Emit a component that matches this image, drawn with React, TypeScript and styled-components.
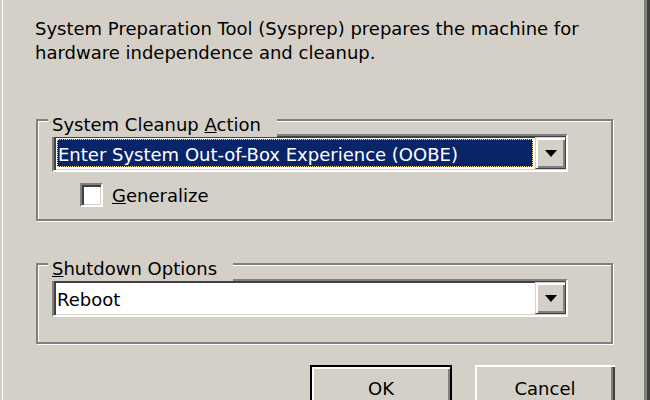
import React from "react";
import styled, { createGlobalStyle } from "styled-components";

const Global = createGlobalStyle`
  html, body { margin: 0; padding: 0; background: #d4d0c8; }
  body { font-family: "DejaVu Sans", Verdana, sans-serif; font-size: 18px; line-height: 24px; color: #000; }
  * { box-sizing: border-box; }
`;

const Window = styled.div`
  width: 650px;
  height: 400px;
  overflow: hidden;
  background: #d4d0c8;
  display: flex;
  flex-direction: column;
  box-shadow: inset 2px 0 0 #d4d0c8, inset 3px 0 0 #ffffff, inset -3px 0 0 #404040, inset -6px 0 0 #808080;
`;

const TitleStrip = styled.div`
  height: 3px;
  margin: 0 6px 0 3px;
  background: linear-gradient(to right, #0a246a, #a6caf0);
`;

const Content = styled.div`
  display: flex;
  flex-direction: column;
  padding: 0 35px 0 36px;
`;

const Description = styled.p`
  margin: 17px 0 0 -1px;
  width: 590px;
  white-space: nowrap;
`;

const Group = styled.div<{ $top: number; $height: number; $padTop: number }>`
  position: relative;
  margin-top: ${(p) => p.$top}px;
  width: 577px;
  height: ${(p) => p.$height}px;
  border: 2px solid #808080;
  box-shadow: inset 1px 1px 0 #ffffff, 1px 1px 0 #ffffff;
  padding: ${(p) => p.$padTop}px 0 0 14px;
  display: flex;
  flex-direction: column;
  align-items: flex-start;
`;

const Caption = styled.span<{ $top: number }>`
  position: absolute;
  top: ${(p) => p.$top}px;
  left: 10px;
  padding: 0 16px 0 4px;
  background: #d4d0c8;
  white-space: nowrap;
`;

const Combo = styled.div`
  width: 516px;
  height: 38px;
  border: 2px solid;
  border-color: #808080 #ffffff #ffffff #808080;
  box-shadow: inset 1px 1px 0 #404040, inset 2px 2px 0 #404040, inset -1px -1px 0 #d4d0c8;
  background: #ffffff;
  padding: 1px 0 1px 1px;
  display: flex;
  align-items: stretch;
`;

const Field = styled.div<{ $selected?: boolean }>`
  flex: 1;
  margin: ${(p) => (p.$selected ? "2px 2px 2px 2px" : "0 2px 0 1px")};
  padding: 3px 0 0 1px;
  display: flex;
  align-items: center;
  white-space: nowrap;
  overflow: hidden;
  background: ${(p) => (p.$selected ? "#0a246a" : "transparent")};
  color: ${(p) => (p.$selected ? "#ffffff" : "#000000")};
  outline: ${(p) => (p.$selected ? "1px dotted #f5db95" : "none")};
  outline-offset: -1px;
`;

const DropButton = styled.div`
  width: 31px;
  height: 32px;
  align-self: center;
  background: #d4d0c8;
  border: 1px solid;
  border-color: #d4d0c8 #404040 #404040 #d4d0c8;
  box-shadow: inset 1px 1px 0 #ffffff, inset 2px 2px 0 #ffffff, inset -1px -1px 0 #808080, inset -2px -2px 0 #808080;
  display: flex;
  align-items: center;
  justify-content: center;
`;

const CheckRow = styled.label`
  display: flex;
  align-items: center;
  gap: 9px;
  margin: 9px 0 0 28px;
`;

const CheckBox = styled.span`
  width: 23px;
  height: 24px;
  flex: none;
  background: #ffffff;
  border: 2px solid;
  border-color: #808080 #ffffff #ffffff #808080;
  box-shadow: inset 1px 1px 0 #404040, inset 2px 2px 0 #404040, inset -1px -1px 0 #d4d0c8;
`;

const CheckText = styled.span`
  padding-top: 3px;
`;

const ButtonRow = styled.div`
  display: flex;
  justify-content: flex-end;
  gap: 23px;
  margin-top: 21px;
  width: 579px;
`;

const PushButton = styled.div<{ $default?: boolean }>`
  width: ${(p) => (p.$default ? 142 : 140)}px;
  height: 42px;
  flex: none;
  display: flex;
  align-items: center;
  justify-content: center;
  background: #d4d0c8;
  border: ${(p) => (p.$default ? "2px solid #000" : "none")};
  box-shadow: ${(p) =>
    p.$default
      ? "inset 2px 2px 0 #ffffff, inset -2px -2px 0 #808080"
      : "inset 2px 2px 0 #ffffff, inset -2px -2px 0 #404040, inset -4px -4px 0 #808080"};
  padding-top: 6px;
`;

const Arrow = () => (
  <svg width="12" height="7" viewBox="0 0 12 7">
    <polygon points="0,0 12,0 6,7" fill="#000" />
  </svg>
);

export default function App() {
  return (
    <>
      <Global />
      <Window>
        <TitleStrip />
        <Content>
          <Description>
            System Preparation Tool (Sysprep) prepares the machine for
            <br />
            hardware independence and cleanup.
          </Description>

          <Group $top={54} $height={102} $padTop={13}>
            <Caption $top={-8}>
              System Cleanup <u>A</u>ction
            </Caption>
            <Combo>
              <Field $selected>Enter System Out-of-Box Experience (OOBE)</Field>
              <DropButton>
                <Arrow />
              </DropButton>
            </Combo>
            <CheckRow>
              <CheckBox />
              <CheckText>
                <u>G</u>eneralize
              </CheckText>
            </CheckRow>
          </Group>

          <Group $top={42} $height={81} $padTop={14}>
            <Caption $top={-8}>
              <u>S</u>hutdown Options
            </Caption>
            <Combo>
              <Field>Reboot</Field>
              <DropButton>
                <Arrow />
              </DropButton>
            </Combo>
          </Group>

          <ButtonRow>
            <PushButton $default>OK</PushButton>
            <PushButton>Cancel</PushButton>
          </ButtonRow>
        </Content>
      </Window>
    </>
  );
}
